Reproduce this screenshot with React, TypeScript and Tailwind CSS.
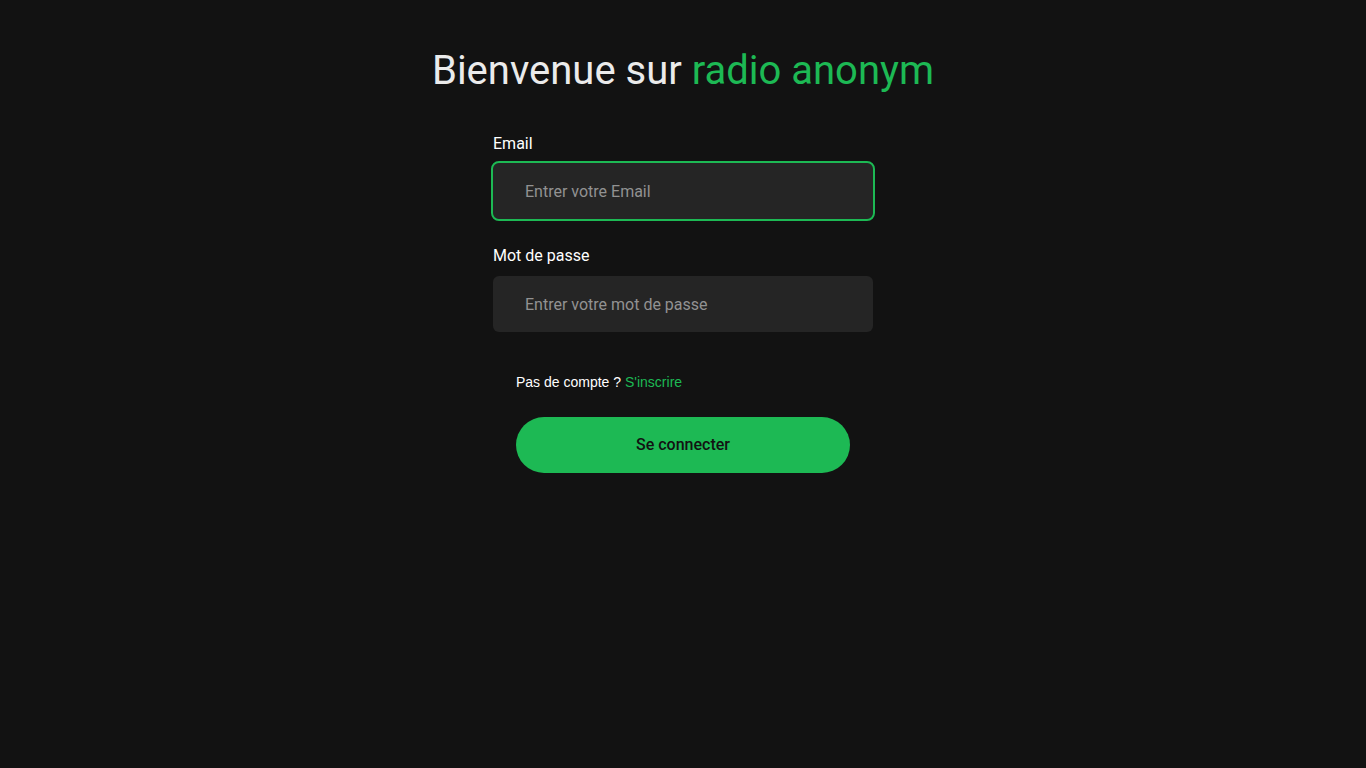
export default function App() {
  return (
    <div className="min-h-screen bg-[#121212] font-['Roboto',sans-serif]">
      <div className="flex flex-col items-center pt-[47px]">
        <h1 className="text-[40px] leading-[48px] font-normal text-[#ebebeb]">
          Bienvenue sur <span className="text-[#1db954]">radio anonym</span>
        </h1>

        <form className="mt-[37px] flex w-[380px] flex-col" onSubmit={(e) => e.preventDefault()}>
          <label className="text-base leading-6 font-normal text-white">Email</label>
          <input
            type="email"
            placeholder="Entrer votre Email"
            className="mt-[7px] h-14 w-full rounded-md bg-[#252525] px-8 text-base text-white outline-2 outline-offset-0 outline-[#1db954] placeholder:text-[#929292]"
          />

          <label className="mt-[25px] text-base leading-6 font-normal text-white">Mot de passe</label>
          <input
            type="password"
            placeholder="Entrer votre mot de passe"
            className="mt-2 h-14 w-full rounded-md bg-[#252525] px-8 text-base text-white outline-none placeholder:text-[#929292]"
          />

          <div className="mx-[23px] mt-10 flex flex-col">
            <p className="font-['Liberation_Sans',Arial,sans-serif] text-sm leading-5 text-white">
              Pas de compte ? <a href="#" className="text-[#1db954]">S'inscrire</a>
            </p>
            <button
              type="submit"
              className="mt-[25px] h-14 w-full rounded-full bg-[#1db954] text-base font-medium text-[#121212]"
            >
              Se connecter
            </button>
          </div>
        </form>
      </div>
    </div>
  );
}
